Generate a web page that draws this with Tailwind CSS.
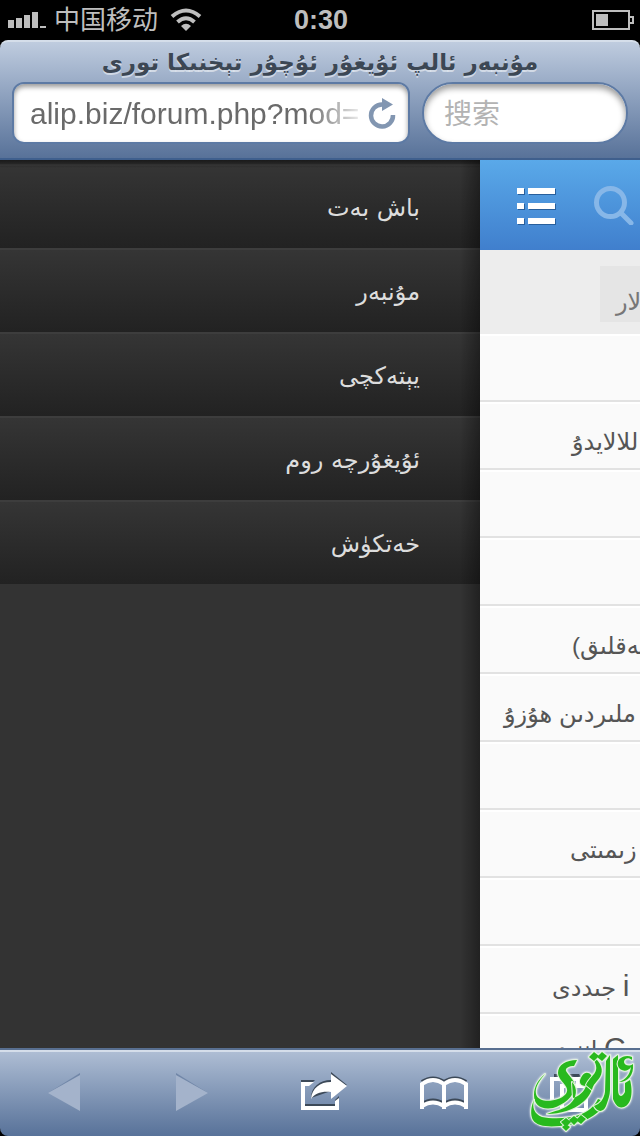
<!DOCTYPE html>
<html lang="ug">
<head>
<meta charset="utf-8">
<meta name="viewport" content="width=device-width, initial-scale=1">
<title>مۇنبەر</title>
<script src="https://cdn.jsdelivr.net/npm/@tailwindcss/browser@4"></script>
</head>
<body class="bg-black">
<div class="flex h-screen flex-col overflow-hidden font-['Liberation_Sans','DejaVu_Sans','Noto_Sans_CJK_SC',sans-serif]">

  <div class="grid h-10 shrink-0 grid-cols-[1fr_auto_1fr] items-center pr-1.5 pl-2 text-[#bebebe]">
    <div class="flex items-center gap-2">
      <svg class="h-4 w-[38px]" viewBox="0 0 38 16" fill="#bebebe" aria-hidden="true"><path d="M0 8h6v8H0zM8 6h6v10H8zM16 3h6v13h-6zM24 0h6v16h-6zM32 14h6v2h-6z"/></svg>
      <span class="text-[26px] leading-10">中国移动</span>
      <svg class="ml-1 h-6 w-8" viewBox="0 0 32 24" fill="none" stroke="#bebebe" stroke-width="4" aria-hidden="true"><path d="M2 8.500Q16-3.500 30 8.500M7.500 14Q16 6.500 24.500 14"/><path d="M11 18Q16 13.500 21 18L16 23Z" fill="#bebebe" stroke="none"/></svg>
    </div>
    <span class="text-[27px] font-bold leading-10">0:30</span>
    <svg class="h-5 w-[42px] justify-self-end" viewBox="0 0 42 20" aria-hidden="true"><path d="M1 1h36v18H1zM37 7h4v6h-4z" fill="none" stroke="#bebebe" stroke-width="2"/><path d="M4 4h12v12H4z" fill="#bebebe"/></svg>
  </div>

  <header class="h-[120px] shrink-0 rounded-t-lg border-t-2 border-b-2 border-t-[#d5deea] border-b-[#3f5f8d] bg-linear-to-b from-[#bfccdf] to-[#587299] px-3">
    <h1 dir="rtl" class="h-10 text-center font-['DejaVu_Sans',sans-serif] text-[23px] font-bold leading-10 text-[#3c4754] [text-shadow:0_2px_0_#ffffff80]">مۇنبەر ئالپ ئۇيغۇر ئۇچۇر تېخنىكا تورى</h1>
    <form class="flex gap-3">
      <div class="flex h-[62px] min-w-0 flex-1 items-center rounded-xl border-2 border-[#5d7aa4] bg-white pr-3 pl-4 shadow-[inset_0_3px_5px_#00000066]">
        <input type="text" aria-label="Address" value="alip.biz/forum.php?mod=" class="min-w-0 flex-1 bg-transparent text-[30px] text-[#6a6a6a] outline-none [mask-image:linear-gradient(to_right,#000_82%,transparent)]">
        <button type="button" aria-label="Reload" class="h-8 w-7"><svg class="h-8 w-7" viewBox="0 0 28 32" aria-hidden="true"><path d="M17 7.500H14A11 11 0 1 0 25 18" fill="none" stroke="#8296b1" stroke-width="4.500"/><path d="M14 1l11 6.500L14 14z" fill="#8296b1"/></svg></button>
      </div>
      <input type="search" aria-label="搜索" placeholder="搜索" class="h-[62px] w-[206px] rounded-full border-2 border-[#5d7aa4] bg-white px-5 pt-1 text-[28px] outline-none shadow-[inset_0_4px_6px_#00000066] placeholder:text-[#b3b3b3]">
    </form>
  </header>

  <main class="grid min-h-0 flex-1 grid-cols-[3fr_1fr] overflow-hidden">
    <nav class="relative bg-[#333] pt-1 font-['DejaVu_Sans',sans-serif] text-[24px] text-[#ddd]">
      <ul dir="rtl">
        <li><a href="#" class="block h-[84px] border-t-2 border-[#3d3d3d] bg-linear-to-b from-[#353535] to-[#222] pr-[60px] leading-[84px]">باش بەت</a></li>
        <li><a href="#" class="block h-[84px] border-t-2 border-[#3d3d3d] bg-linear-to-b from-[#353535] to-[#222] pr-[60px] leading-[84px]">مۇنبەر</a></li>
        <li><a href="#" class="block h-[84px] border-t-2 border-[#3d3d3d] bg-linear-to-b from-[#353535] to-[#222] pr-[60px] leading-[84px]">يېتەكچى</a></li>
        <li><a href="#" class="block h-[84px] border-t-2 border-[#3d3d3d] bg-linear-to-b from-[#353535] to-[#222] pr-[60px] leading-[84px]">ئۇيغۇرچە روم</a></li>
        <li><a href="#" class="block h-[84px] border-t-2 border-[#3d3d3d] bg-linear-to-b from-[#353535] to-[#222] pr-[60px] leading-[84px]">خەتكۈش</a></li>
      </ul>
      <div class="absolute inset-x-0 top-0 h-2 bg-linear-to-b from-black/50 to-transparent"></div>
      <div class="absolute inset-y-0 right-0 w-5 bg-linear-to-r from-transparent to-black/35"></div>
    </nav>

    <section class="min-w-0 overflow-hidden bg-[#fafafa] font-['Liberation_Sans','DejaVu_Sans',sans-serif] text-[24px] text-[#555]">
      <div class="flex h-[90px] items-center gap-[38px] bg-linear-to-b from-[#5aa9e9] to-[#407fcd] pl-9">
        <button type="button" aria-label="Menu" class="shrink-0"><svg class="h-10 w-10" viewBox="0 0 40 40" aria-hidden="true"><path d="M2 4h7v6H2zM13 4h27v6H13zM2 19h7v6H2zM13 19h27v6H13zM2 34h7v6H2zM13 34h27v6H13z" fill="#285f9c"/><path d="M1 3h7v6H1zM12 3h27v6H12zM1 18h7v6H1zM12 18h27v6H12zM1 33h7v6H1zM12 33h27v6H12z" fill="#fff"/></svg></button>
        <button type="button" aria-label="Search" class="shrink-0"><svg class="h-10 w-10" viewBox="0 0 40 40" fill="none" stroke="#87b7e8" aria-hidden="true"><circle cx="16.500" cy="17.500" r="14" stroke-width="5"/><path d="M27 28l10 10" stroke-width="5" stroke-linecap="round"/></svg></button>
      </div>
      <div class="h-[84px] bg-[#ededed] py-4 pl-[120px]">
        <a href="#" class="block h-14 bg-[#e5e5e5] pl-4 leading-[72px] text-[#777]"><span dir="rtl" class="inline-block whitespace-nowrap">لار</span></a>
      </div>
      <ul class="whitespace-nowrap leading-[76px]">
        <li class="h-[68px] border-y-2 border-t-white border-b-[#e2e2e2]"></li>
        <li class="h-[68px] border-y-2 border-t-white border-b-[#e2e2e2] pl-[92px]"><a href="#" dir="rtl" class="inline-block">للالايدۇ</a></li>
        <li class="h-[68px] border-y-2 border-t-white border-b-[#e2e2e2]"></li>
        <li class="h-[68px] border-y-2 border-t-white border-b-[#e2e2e2]"></li>
        <li class="h-[68px] border-y-2 border-t-white border-b-[#e2e2e2] pl-[92px]"><a href="#" dir="rtl" class="inline-block">ىەقلىق)</a></li>
        <li class="h-[68px] border-y-2 border-t-white border-b-[#e2e2e2] pl-6"><a href="#" dir="rtl" class="inline-block">ملىردىن ھۇزۇ</a></li>
        <li class="h-[68px] border-y-2 border-t-white border-b-[#e2e2e2]"></li>
        <li class="h-[68px] border-y-2 border-t-white border-b-[#e2e2e2] pl-[90px]"><a href="#" dir="rtl" class="inline-block">زىمىتى</a></li>
        <li class="h-[68px] border-y-2 border-t-white border-b-[#e2e2e2]"></li>
        <li class="h-[68px] border-y-2 border-t-white border-b-[#e2e2e2] pl-[72px]"><a href="#" dir="rtl" class="inline-block"><span class="text-[30px]">i</span> جىددى</a></li>
        <li class="h-[68px] border-t-2 border-t-white pl-[52px] leading-[64px]"><a href="#" dir="rtl" class="inline-block"><span class="text-[30px]">C</span> اننىدىن</a></li>
      </ul>
    </section>
  </main>

  <footer class="relative grid h-[88px] shrink-0 grid-cols-5 items-center rounded-b-lg border-t-2 border-[#586f90] bg-linear-to-b from-[#b0bfd5] to-[#587299] shadow-[inset_0_2px_0_#d5deea]">
    <button type="button" aria-label="Back" class="justify-self-center"><svg class="h-10 w-8" viewBox="0 0 32 40" aria-hidden="true"><path d="M0 20L32 0v4z" fill="#7187a8"/><path d="M0 20L32 2v36z" fill="#a4b3cb"/></svg></button>
    <button type="button" aria-label="Forward" class="justify-self-center"><svg class="h-10 w-8" viewBox="0 0 32 40" aria-hidden="true"><path d="M32 20L0 0v4z" fill="#7187a8"/><path d="M32 20L0 2v36z" fill="#a4b3cb"/></svg></button>
    <button type="button" aria-label="Share" class="mb-1 ml-2 justify-self-center"><svg class="h-10 w-12" viewBox="0 0 48 40" aria-hidden="true"><g fill="#3c4958"><path d="M1 9h14l-4 4H1zM5 33h30v2H5zM35 29l4-4v3l-4 4z"/><path d="M11 27C11 16 20 9 31 9V1l16 13-16 6z"/></g><path d="M1 11h13l-5 4H5v20h30v-5l4-3v12H1z" fill="#fff"/><path d="M11 28C12 17 20 11 31 11V3l16 12-16 13v-7C22 20 15 22 11 28z" fill="#fff"/></svg></button>
    <button type="button" aria-label="Bookmarks" class="mr-2 justify-self-center"><svg class="h-10 w-[50px]" viewBox="0 0 50 40" fill="none" stroke-width="4" aria-hidden="true"><path d="M3 9Q14 2 25 9Q36 2 47 9M3 31Q14 24 25 31Q36 24 47 31" stroke="#3c4958"/><path d="M3 36V11Q14 3 25 11Q36 3 47 11V36M25 10v26M3 33Q14 26 25 33Q36 26 47 33" stroke="#fff"/></svg></button>
    <button type="button" aria-label="Pages" class="mr-4 justify-self-center"><svg class="h-10 w-10" viewBox="0 0 40 40" fill="none" stroke-width="4" aria-hidden="true"><path d="M6 3h24l2 3" stroke="#3c4958"/><path d="M10 28H4V6h26v5M14 13h24v24H14z" stroke="#fff"/></svg></button>
    <svg role="img" aria-label="ئالىپ تورى" class="absolute right-0 bottom-0 h-[90px] w-[114px] drop-shadow-[0_0_1px_#fff]" viewBox="0 0 114 90">
      <g fill="#28b91e" stroke="#e2f4dc" stroke-width="2" paint-order="stroke" stroke-linejoin="round">
        <path d="M19 28C11 37 9 43 10 48C12 56 24 56 32 53C38 51 42 47 41 43C40 38 32 33 32 27C32 19 40 14 51 14L48 20C43 20 39 22 40 25C42 29 49 34 49 41C48 51 37 59 27 62C15 64 8 59 8 49C8 40 13 33 19 28z"/>
        <path d="M8 54C6 61 8 68 16 71C25 73 42 73 53 69C62 66 69 60 72 53L80 56C74 68 58 77 42 79C28 81 12 82 7 74C4 69 5 60 8 54z"/>
        <path d="M46 36C52 42 51 52 44 58C37 64 28 65 21 68C34 68 48 64 57 56C64 50 68 42 67 34C66 27 60 24 56 30C52 36 54 40 60 40C58 46 53 50 47 52z"/>
        <path d="M68 11C75 17 78 24 74 31C71 36 67 38 66 44L60 39C63 32 69 29 70 24Q71 19 68 15z"/>
        <path d="M80 15L84 9V44C84 49 82 54 80 60C77 67 71 66 68 60C74 58 78 53 79 46z"/>
        <path d="M87 13L92 9V44C92 51 96 52 99 46V37L104 34C107 45 106 58 98 61C92 63 89 58 87 53z"/>
        <path d="M106 11C98 8 90 13 92 20C94 25 101 27 105 21C104 29 99 34 93 36C102 36 108 29 107 18C103 21 98 19 98 16C98 12 103 11 106 14z"/>
        <path d="M68 6l5 4-5 5-5-4zM76 6l5 4-5 5-5-4zM40 72l5 4-5 5-5-5zM48 70l5 4-5 5-5-5zM55 69l5 4-5 5-5-4zM40 78l4 3-4 4-4-4z"/>
      </g>
    </svg>
  </footer>
</div>
</body>
</html>
